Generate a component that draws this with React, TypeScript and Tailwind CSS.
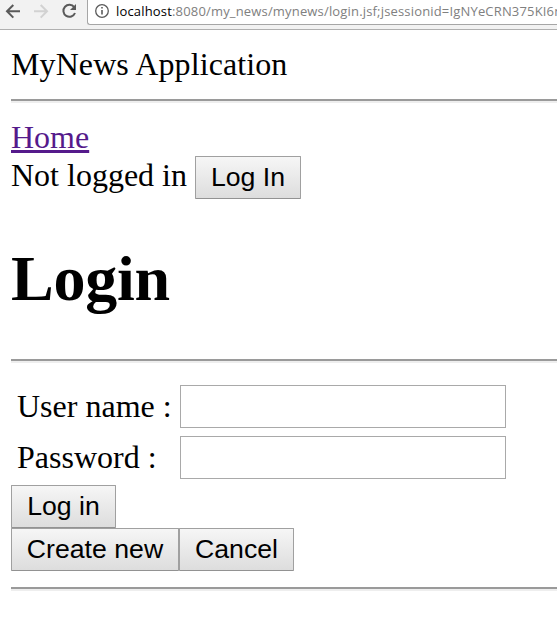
import type { ReactNode } from "react";

function Rule({ className }: { className: string }) {
  return (
    <div className={`ml-[11px] h-1 border-y-2 border-t-[#9a9a9a] border-b-[#eeeeee] ${className}`} />
  );
}

function FormButton({ className, children }: { className: string; children: ReactNode }) {
  return (
    <button
      type="button"
      className={`flex h-[43px] shrink-0 items-start justify-center whitespace-nowrap rounded-[1px] border border-[#a0a0a0] border-b-[#929292] bg-linear-to-b from-[#f6f6f6] to-[#dddddd] pt-[5px] font-['Liberation_Sans',Arial,sans-serif] text-[26.67px] leading-[30px] text-black ${className}`}
    >
      {children}
    </button>
  );
}

function Toolbar() {
  return (
    <header className="flex h-[30px] border-b border-[#b0b0b0] bg-[#f2f2f2]">
      <svg width="87" height="24" viewBox="0 0 87 24" fill="none" strokeWidth="2" className="shrink-0">
        <path d="M20 11.3H7.5M13.3 5L7 11.3L13.3 17.6" stroke="#5a5a5a" />
        <path d="M34 11.3H46.5M40.7 5L47 11.3L40.7 17.6" stroke="#d2d2d2" />
        <path d="M74.2 7.2A6 6 0 1 0 75 13" stroke="#5a5a5a" />
        <path d="M76 4V10H70Z" fill="#5a5a5a" />
      </svg>
      <div className="flex h-[25px] min-w-0 flex-1 overflow-hidden rounded-bl-[3px] border-b border-l border-[#a6a6a6] bg-white">
        <svg width="28" height="24" viewBox="0 0 28 24" fill="none" className="shrink-0">
          <circle cx="14" cy="11" r="6.3" stroke="#5a5a5a" strokeWidth="1.3" />
          <path d="M14 10V14.5M14 7V8.6" stroke="#5a5a5a" strokeWidth="1.6" />
        </svg>
        <span className="whitespace-nowrap font-['Open_Sans','Noto_Sans',sans-serif] text-[13px] leading-[22px] tracking-[0.17px] text-[#808080]">
          <span className="text-black">localhost</span>
          <span>:8080/my_news/mynews/login.jsf;jsessionid=IgNYeCRN375KI6n</span>
        </span>
      </div>
    </header>
  );
}

function Field({ label, type }: { label: string; type: string }) {
  return (
    <div className="flex h-[43px]">
      <label className="w-[163px] shrink-0 pt-[3px]">{label}</label>
      <input aria-label={label} type={type} className="h-[43px] w-[326px] border border-[#a9a9a9] bg-white px-1 outline-none" />
    </div>
  );
}

export default function App() {
  return (
    <div className="h-[634px] w-full overflow-hidden bg-white font-['Liberation_Serif','Times_New_Roman',serif] text-[32px] leading-[36px] text-black">
      <Toolbar />
      <div className="ml-[11px] mt-4 tracking-[0.1px]">MyNews Application</div>
      <Rule className="mt-[17px]" />
      <div className="ml-[11px] mt-4 h-[37px]">
        <a className="text-[#551a8b] underline decoration-[#551a8b] decoration-3 underline-offset-2">Home</a>
      </div>
      <div className="ml-[11px] flex h-[43px]">
        <span className="w-[184px] whitespace-nowrap pt-px">Not logged in</span>
        <FormButton className="w-[106px]">Log In</FormButton>
      </div>
      <h1 className="ml-[11px] mt-[44px] text-[64px] font-bold leading-[72px] tracking-[-0.25px]">Login</h1>
      <Rule className="mt-[44px]" />
      <form className="mt-[22px]">
        <div className="ml-[17px] flex flex-col gap-2">
          <Field label="User name :" type="text" />
          <Field label="Password :" type="password" />
        </div>
        <div className="ml-[11px] mt-[6px]">
          <FormButton className="w-[105px]">Log in</FormButton>
          <div className="flex">
            <FormButton className="w-[168px]">Create new</FormButton>
            <FormButton className="w-[115px]">Cancel</FormButton>
          </div>
        </div>
      </form>
      <Rule className="mt-4" />
    </div>
  );
}
